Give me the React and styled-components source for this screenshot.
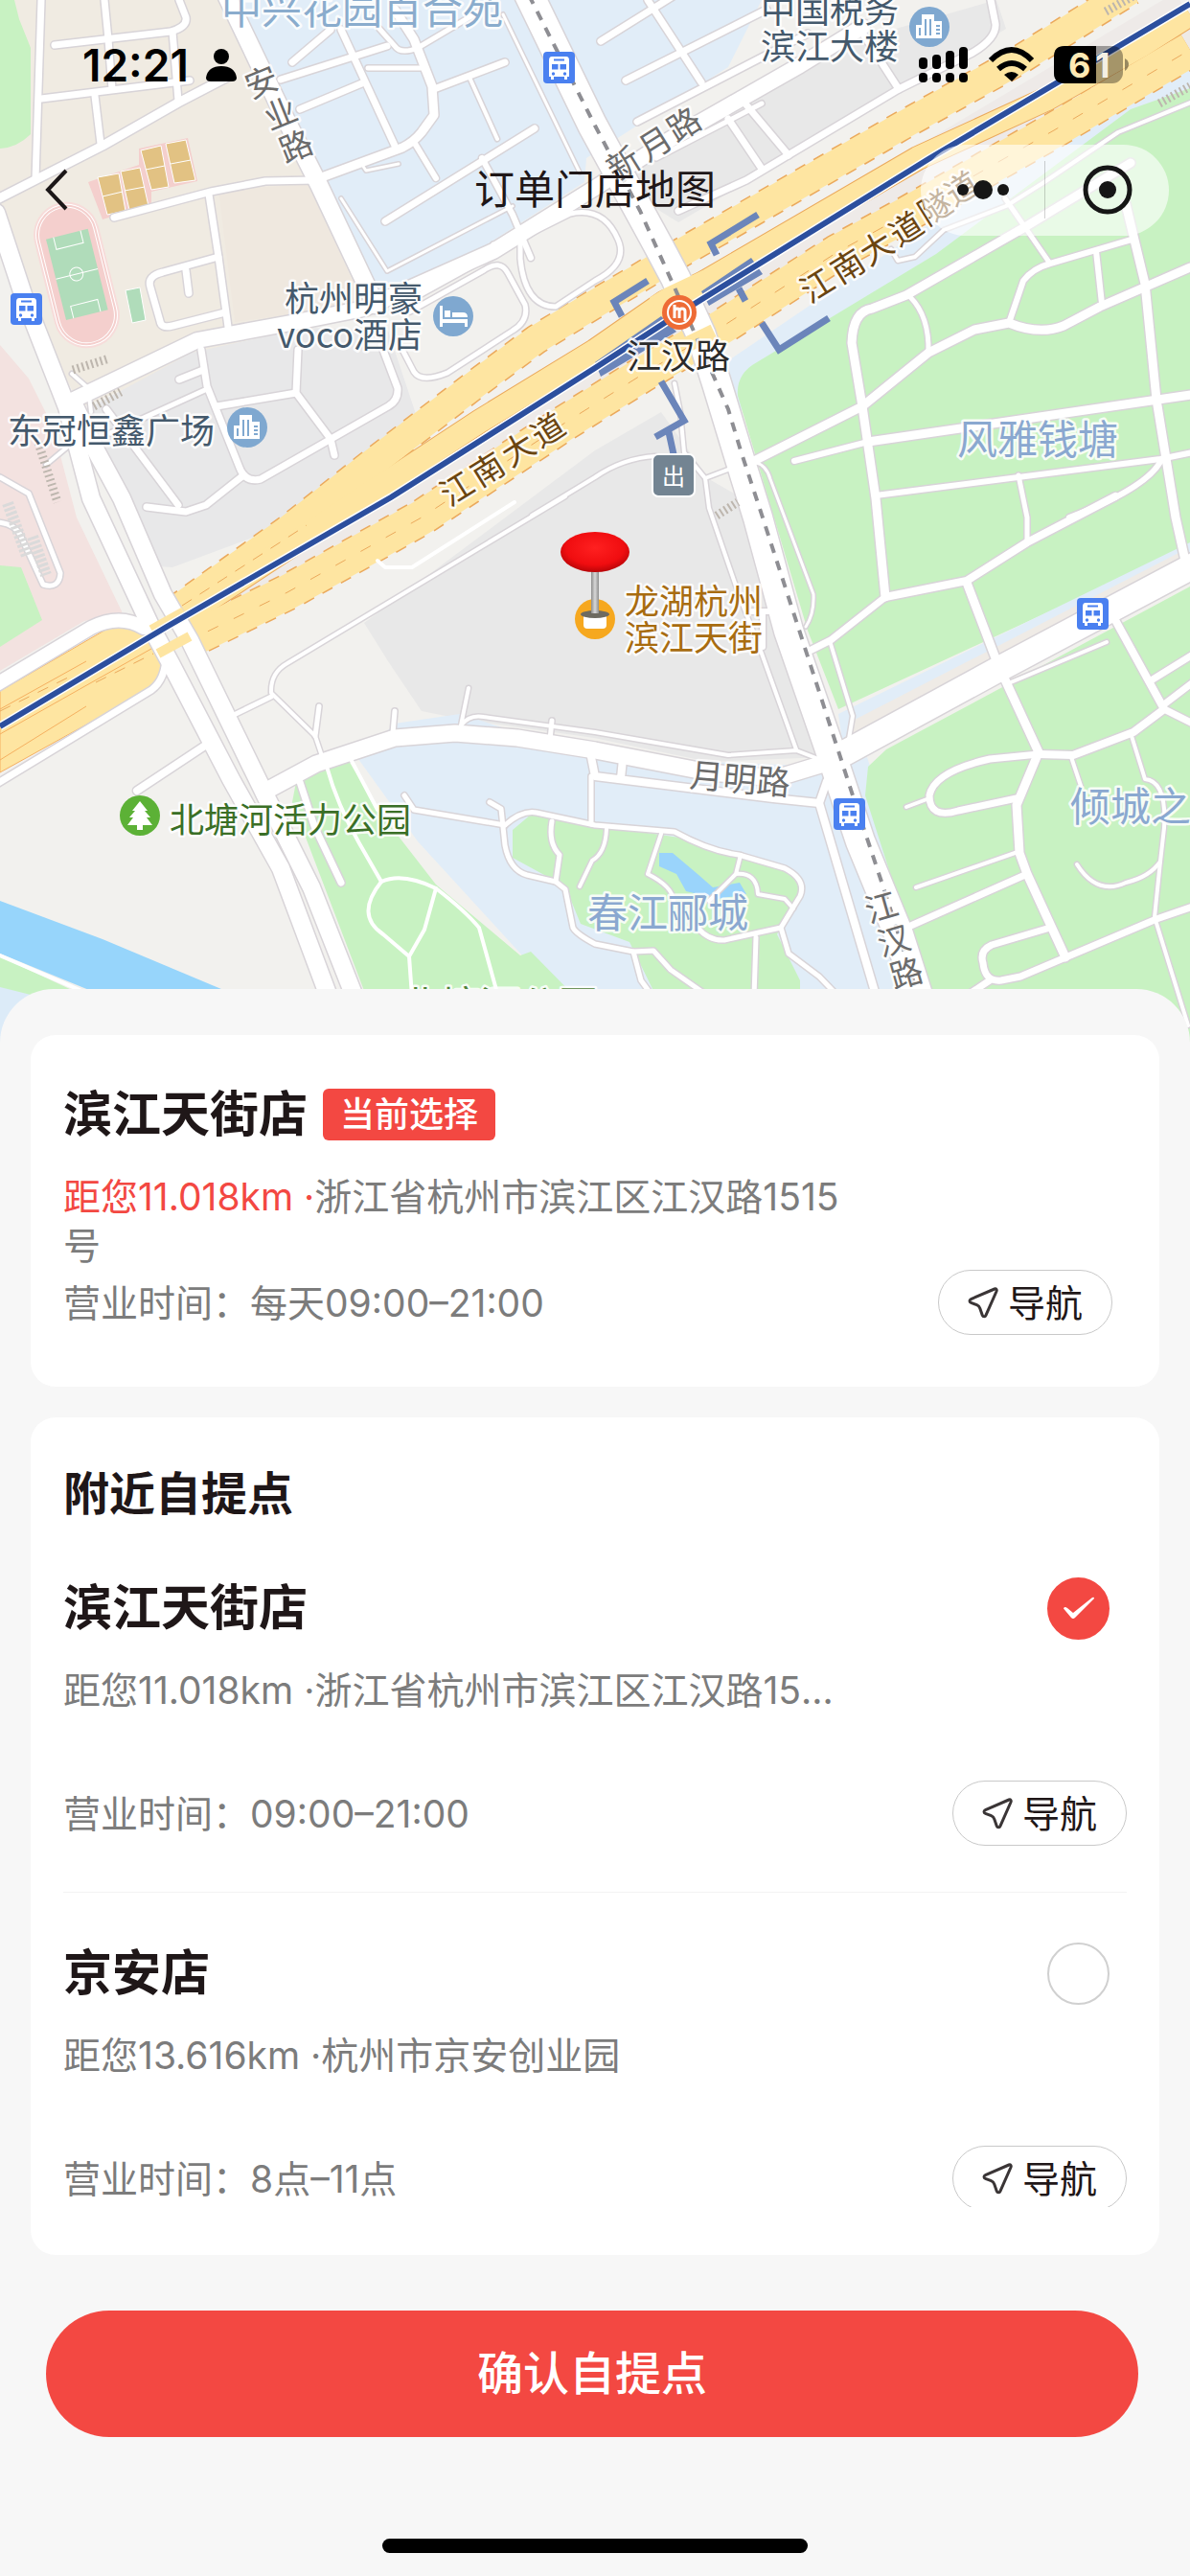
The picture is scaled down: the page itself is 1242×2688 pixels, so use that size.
import React, { useState } from "react";
import styled, { createGlobalStyle } from "styled-components";

const GREEN = "#c8f2c2";
const BLUE = "#e1edf8";

const areas = [
  { d: "M0 0H240L268 75 325 190 385 320 240 360 85 425 55 370 0 235Z", fill: "#f0ebe2" },
  { d: "M0 0H15L20 20 32 50V140Q18 154 0 155Z", fill: GREEN },
  { d: "M228 198 325 192 378 318 245 336Z", fill: "#efe8df" },
  { d: "M245 0H795L760 70 612 165 610 190 404 322 390 325 333 193Z", fill: BLUE },
  { d: "M640 190 760 120 900 40 1040 0 1050 30 938 98 708 232Z", fill: "#e8e8e8" },
  { d: "M85 430 200 368 320 342 405 345 440 450 430 470 320 540 180 592 150 590Z", fill: "#e8e8e9" },
  { d: "M0 360 30 395 55 445 80 540 128 640 88 648 0 700Z", fill: "#f3e2e0" },
  { d: "M0 590 22 592 44 647 0 675Z", fill: GREEN },
  { d: "M380 650 621 470 690 430 740 500 775 520 862 790 740 795 620 770 480 750 440 742 405 690Z", fill: "#e8e8e8" },
  { d: "M740 390 1242 50V150L770 430Z", fill: BLUE },
  { d: "M1242 92 1180 114 977 265 790 378Q768 390 770 413L843 658 875 740 1242 570Z", fill: GREEN },
  { d: "M875 745 1242 566V590L880 780Z", fill: BLUE },
  { d: "M878 778 890 752 1230 577 1230 590Z", fill: "#efebe6" },
  { d: "M862 800 905 790 1000 1090H950Z", fill: BLUE },
  { d: "M906 800 925 782 1242 612V1095H985L935 930 903 830Z", fill: GREEN },
  { d: "M374 792 412 755 480 745 621 790 862 800 960 1090H600L545 997 436 878Z", fill: BLUE },
  { d: "M309 816 364 794 396 847 455 923 543 997 554 993 620 1060H390L305 837Z", fill: GREEN },
  {
    d: "M535 866 554 850 621 861 716 875 819 904 837 926 811 975 835 1023V1050H690L657 983 606 964 590 925 535 895Z",
    fill: GREEN,
  },
  { d: "M688 890H702L728 912 744 926 772 921 779 933 750 938 716 930 706 912 688 904Z", fill: "#9ad4fb" },
  { d: "M0 940 107 980 250 1040H110L0 995Z", fill: "#97d5fb" },
  { d: "M0 998 90 1040H0Z", fill: GREEN },
  { d: "M0 1030 40 1040V1090H0Z", fill: "#dcebf8" },
];

// w is the width of the white surface, the casing is drawn a little wider
const roads = [
  { w: 18, d: "M-4 222 25 310 70 425 95 520 158 655 178 692 241 813 293 906 345 1045" },
  { w: 18, d: "M76 420 100 470 127 520 170 620 198 668 277 830 325 926 372 1045" },
  { w: 18, d: "M236 -5 293 114 333 193 392 318" },
  { w: 16, d: "M71 420 150 382 206 355 309 336 380 322 515 262 621 196 700 145 835 68 900 28" },
  { w: 30, d: "M550 -10 618 130 688 258 705 290 732 350 748 400 773 482 791 540 823 658 866 782 898 878 938 975 965 1060" },
  { w: 26, d: "M870 792 1041 699 1250 588" },
  { w: 17, d: "M866 795 810 812 740 806 621 783 540 770 475 765 412 770 330 797 280 824" },
  { w: 14, d: "M-5 715 95 655Q125 640 150 655" },
  { w: 7, d: "M-5 819 158 720Q174 708 173 680" },
  { w: 7, d: "M109 0 113 41 117 93" },
  { w: 7, d: "M57 47 178 33Q196 28 194 18L187 0" },
  { w: 7, d: "M180 33 186 105" },
  { w: 7, d: "M43 103 198 84" },
  { w: 7, d: "M99 100 105 150" },
  { w: 7, d: "M43 0 37 187" },
  { w: 9, d: "M-3 208 107 152 186 107 238 80" },
  { w: 7, d: "M119 227 220 200 277 189 330 188" },
  { w: 7, d: "M218 203 228 268 238 341" },
  { w: 7, d: "M228 268 170 284Q153 288 157 300L167 335Q168 343 180 340L235 326" },
  { w: 7, d: "M194 282 197 306" },
  { w: 7, d: "M210 365 216 403 250 488Q256 504 272 500L405 424Q416 418 415 405L398 360" },
  { w: 7, d: "M311 365 309 410 345 458 349 475" },
  { w: 7, d: "M226 424 309 410" },
  { w: 7, d: "M187 396 212 386" },
  { w: 5, d: "M216 406 115 452" },
  { w: 7, d: "M111 427 186 527" },
  { w: 7, d: "M153 529 194 534 215 527 254 496" },
  { w: 9, d: "M333 186 420 154Q432 148 440 138L453 120 451 90 432 41 412 10" },
  { w: 7, d: "M356 31 412 152" },
  { w: 7, d: "M305 65 345 31" },
  { w: 7, d: "M293 83 404 48" },
  { w: 5, d: "M396 30 412 48Q418 57 436 50L500 12" },
  { w: 7, d: "M313 114 380 86" },
  { w: 5, d: "M384 71 440 71" },
  { w: 7, d: "M453 93 527 65" },
  { w: 4, d: "M491 83 519 145" },
  { w: 6, d: "M432 148 455 186" },
  { w: 7, d: "M402 231 558 134" },
  { w: 6, d: "M503 165 535 224 554 269" },
  { w: 3, d: "M376 169 382 178 416 171" },
  { w: 3, d: "M525 15 605 180" },
  { w: 3, d: "M254 20 290 95" },
  { w: 3, d: "M356 207 404 283 535 215" },
  { w: 5, d: "M543 238V270Q548 320 580 320L621 293Q656 275 645 250 630 215 595 223L545 248" },
  { w: 5, d: "M420 365 432 388Q440 400 467 389L535 345Q552 335 548 318L530 285Q522 270 505 282L428 325" },
  { w: 5, d: "M515 255 514 266 425 315" },
  { w: 7, d: "M627 43 720 -15" },
  { w: 7, d: "M653 84 800 10" },
  { w: 7, d: "M665 127 843 35" },
  { w: 7, d: "M676 0 732 86" },
  { w: 7, d: "M708 220 779 188 938 93 1015 55Q1040 40 1039 25L1033 -5" },
  { w: 7, d: "M771 100 823 162" },
  { w: 7, d: "M760 124 795 176" },
  { w: 7, d: "M898 31 938 93" },
  { w: 5, d: "M685 165 795 108" },
  { w: 9, d: "M785 482 900 424 969 368 1017 344 1053 337Q1085 350 1110 340L1148 320 1242 279" },
  { w: 9, d: "M924 623 914 520 900 424 889 358Q890 325 910 322L946 308 1068 238 1180 170" },
  { w: 5, d: "M950 310Q970 330 969 368" },
  { w: 6, d: "M1053 337 1068 293Q1078 280 1096 275L1181 250" },
  { w: 5, d: "M1049 207 1096 275" },
  { w: 6, d: "M1144 262 1150 317" },
  { w: 9, d: "M1175 213 1195 296 1207 417 1227 540 1237 585" },
  { w: 9, d: "M906 461 1250 411" },
  { w: 6, d: "M829 481 906 461" },
  { w: 6, d: "M914 517 1211 479 1250 471" },
  { w: 5, d: "M1063 496 1072 540V565" },
  { w: 6, d: "M1211 482Q1195 510 1116 540" },
  { w: 4, d: "M1250 104 1167 138 1090 190 1050 215 985 240 955 268 937 272 930 260" },
  { w: 8, d: "M924 623 1009 606 1072 566 1164 518" },
  { w: 7, d: "M924 623 867 668 847 678" },
  { w: 9, d: "M1009 608 1041 692 1084 785 1061 840 1064 890 1072 912 1112 999" },
  { w: 4, d: "M867 672 890 747 886 771" },
  { w: 7, d: "M1084 787 1033 792Q975 805 970 830 970 855 1000 846L1061 833" },
  { w: 4, d: "M946 842 970 833" },
  { w: 8, d: "M1084 787 1120 788 1183 764 1215 740 1164 647" },
  { w: 7, d: "M1203 709 1245 683M1215 735 1245 712M1215 740 1245 755" },
  { w: 4, d: "M1181 768 1195 813Q1218 815 1215 864L1211 899 1205 957 1240 1070" },
  { w: 4, d: "M1211 899Q1200 915 1175 921 1145 935 1124 902" },
  { w: 7, d: "M946 968 1072 912" },
  { w: 4, d: "M956 926 1065 888" },
  { w: 7, d: "M1096 968 1035 986Q1022 992 1026 1005 1028 1025 1045 1023L1065 1019 1207 959 1245 946" },
  { w: 7, d: "M1033 1023 1000 1045" },
  { w: 4, d: "M1118 790 1128 820" },
  { w: 4, d: "M1155 670 1055 712" },
  { w: 8, d: "M855 838 916 1045" },
  { w: 8, d: "M863 815 855 838 807 833 621 810 617 790M650 792 648 812" },
  { w: 5, d: "M617 810V860" },
  {
    w: 5,
    d: "M527 861Q545 845 560 848L621 861 704 868Q740 888 771 892L819 906Q842 918 835 935L815 968 823 995 855 1019 880 1045",
  },
  { w: 5, d: "M422 830 432 845 527 861" },
  { w: 5, d: "M511 837 523 844 527 882Q532 908 550 913L580 920 590 928 598 968Q602 975 621 985L661 993 669 1023 685 1045" },
  { w: 5, d: "M576 857Q572 880 584 892L580 920" },
  { w: 4, d: "M633 865Q632 890 618 898L605 925" },
  { w: 4, d: "M690 870 676 912Q702 925 703 940M773 892 768 912 740 940M768 912Q790 910 791 933L819 938 828 948" },
  { w: 5, d: "M815 968 756 981Q740 982 728 968M789 978 787 1040" },
  { w: 5, d: "M661 993 682 992 700 1012 740 1040" },
  { w: 4, d: "M590 518 300 692Q282 702 283 723L329 768 337 792" },
  { w: 5, d: "M242 747 283 727M333 737 329 768" },
  { w: 5, d: "M412 742 410 765M576 752 574 772" },
  { w: 4, d: "M489 718 481 757Q490 745 505 748L621 764 760 788 831 783 862 795" },
  { w: 8, d: "M143 825 214 778" },
  { w: 4, d: "M704 400 710 430 714 472 736 499 740 530 771 620 795 682 831 782" },
  { w: 4, d: "M555 538 621 498Q650 478 684 476M736 499 765 488" },
  { w: 3, d: "M787 482Q800 485 804 500L849 620Q850 640 841 654" },
  { w: 6, d: "M796 640V675M785 638H808" },
  { w: 7, d: "M313 816 328 862 356 921" },
  { w: 5, d: "M-5 545Q15 545 22 560L45 610Q62 615 63 598L30 515 0 498" },
  { w: 4, d: "M75 390 92 405 95 430M48 485 90 450" },
];

const parkPaths = [
  "M341 800Q352 840 375 880L398 920Q420 910 455 927 485 950 500 968L520 1040",
  "M398 920Q370 955 400 975L427 998 430 1040M455 927 443 970 427 998",
  "M366 792 394 845",
  "M0 997 90 1036",
  "M394 585 402 592H430L537 524",
];

const stairs = ["M76 386 114 374", "M98 424 126 409", "M40 462 60 524", "M1154 12 1186 -6", "M1210 108 1242 90", "M748 538 770 524"];

// carriageways of 江南大道
const ramp = "M184 636 300 553 385 486 500 398 560 354 621 317 667 290 700 270 940 132 1060 65 1180 -10";
const northLane = "M187 646 330 552 500 440 621 366 693 316 733 296 958 165 1093 103 1190 48 1242 15";
const southLane = "M190 672 300 618 440 540 590 441 670 391 752 342 874 263 940 227 1100 136 1242 52";
const metroLine = "M0 758 174 654 408 519 621 384 712 325 969 166 1242 4";

function Casing({ w, d }) {
  return <path d={d} strokeWidth={w + 3} stroke="#d8d4d8" />;
}

function Label({ lines, x, y, size = 36, lineHeight = 38, color, anchor = "start", angle = 0, weight = 400 }) {
  return (
    <MapText
      fill={color}
      fontSize={size}
      fontWeight={weight}
      textAnchor={anchor}
      transform={angle ? `rotate(${angle} ${x} ${y})` : undefined}
    >
      {lines.map((line, i) => (
        <tspan key={line} x={x} y={y + i * lineHeight}>
          {line}
        </tspan>
      ))}
    </MapText>
  );
}

// road names that run down a street, one turned character after another
function StreetName({ chars, color = "#6b6b6b", angle }) {
  return chars.map(([char, x, y], i) => (
    <MapText
      key={i}
      fill={color}
      fontSize={34}
      textAnchor="middle"
      transform={`translate(${x} ${y}) rotate(${angle})`}
    >
      <tspan y={12}>{char}</tspan>
    </MapText>
  ));
}

function BusStop({ x, y }) {
  return (
    <g transform={`translate(${x} ${y})`}>
      <rect width="33" height="33" rx="4" fill="#4a80f0" />
      <path d="M9 5H24Q27 5 27 9V26H25V29H22V26H11V29H8V26H6V9Q6 5 9 5Z" fill="#fff" />
      <path d="M11 7.500H22V9.500H11ZM9 13H15.500V18.500H9ZM17.500 13H24V18.500H17.500Z" fill="#4a80f0" />
      <circle cx="10.500" cy="23" r="1.700" fill="#4a80f0" />
      <circle cx="22.500" cy="23" r="1.700" fill="#4a80f0" />
    </g>
  );
}

function Building({ x, y }) {
  return (
    <g transform={`translate(${x} ${y})`}>
      <circle r="21" fill="#7fa8d0" />
      <path d="M-14 12V-2H-8V-13H5V-6H13V12Z" fill="#fff" />
      <path d="M-10 1V9M-4 -8V9M1 -8V9M7 -1H11M7 3H11M7 7H11" stroke="#7fa8d0" strokeWidth="2" />
    </g>
  );
}

function StoreMap() {
  return (
    <MapSvg viewBox="0 0 1242 1090" preserveAspectRatio="xMidYMin slice" role="img" aria-label="门店地图">
      <defs>
        <radialGradient id="pinHead" cx="50%" cy="40%" r="60%">
          <stop offset="0" stopColor="#ff2020" />
          <stop offset="0.7" stopColor="#f00d10" />
          <stop offset="1" stopColor="#b80508" />
        </radialGradient>
        <linearGradient id="pinStem">
          <stop offset="0" stopColor="#8d8d8d" />
          <stop offset="0.5" stopColor="#d8d8d8" />
          <stop offset="1" stopColor="#8d8d8d" />
        </linearGradient>
      </defs>
      <rect width="1242" height="1090" fill="#f2f1ee" />
      {areas.map((area) => (
        <path key={area.d} {...area} />
      ))}

      {/* sports ground */}
      <g transform="rotate(-14 80 287)">
        <rect x="47" y="211" width="66" height="152" rx="33" fill="#f4cfcd" stroke="#f7dcda" strokeWidth="3" />
        <g fill="none" stroke="#fff" strokeWidth="1">
          <rect x="51" y="215" width="58" height="144" rx="29" />
          <rect x="48" y="212" width="64" height="150" rx="32" />
        </g>
        <rect x="58" y="243" width="45" height="87" fill="#b0dcba" />
        <path d="M58 286H103M66 243V256H95V243M66 330V317H95V330" fill="none" stroke="#fff" strokeWidth="1" />
        <circle cx="80" cy="286" r="7" fill="none" stroke="#fff" strokeWidth="1" />
      </g>
      <path d="M92 190 145 172V155L196 144 206 189 158 200V213L107 229Z" fill="#f4cfcd" />
      <g fill="#e2c283" stroke="#fff" strokeWidth="1">
        <path d="M102 185 124 181 131 220 112 224ZM107 205 128 200" />
        <path d="M126 179 146 175 155 215 135 219ZM130 199 151 195" />
        <path d="M147 157 168 152 176 195 158 198ZM152 177 172 173" />
        <path d="M173 150 194 146 204 188 182 191ZM178 171 199 167" />
      </g>
      <path d="M131 303 146 300 152 334 138 337Z" fill="#b0dcba" stroke="#fff" />

      <g fill="none" strokeLinejoin="round">
        <path d="M190 650 420 512 621 392 740 318 960 186 1242 18" stroke="#eeeae8" strokeWidth="60" />
        <path d="M0 721 112 656Q150 645 172 662L172 690Q170 710 150 723L0 806Z" fill="#fee5a1" stroke="#f5b060" />
        <g stroke="#eba95c">
          <path d={ramp} strokeWidth="32" strokeDasharray="12 10" />
          <path d={northLane} strokeWidth="26" />
          <path d={southLane} strokeWidth="39" strokeDasharray="12 10" />
        </g>
        <g stroke="#fee5a1">
          <path d={ramp} strokeWidth="29" />
          <path d={northLane} strokeWidth="24" />
          <path d={southLane} strokeWidth="36" />
        </g>
        <path d="M190 632 320 548M0 742 75 705M100 712 160 682M70 770 160 720" stroke="#eba95c" strokeDasharray="12 10" />
        <path d={southLane} stroke="#eba95c" strokeDasharray="12 18" />
        <path d="M0 766 165 673M0 793 90 737M0 740 90 690" stroke="#f5b060" strokeWidth="1" />
      </g>

      <g fill="none" strokeLinejoin="round" strokeLinecap="round">
        {roads.map((road) => (
          <Casing key={road.d} {...road} />
        ))}
        {roads.map((road) => (
          <path key={road.d} d={road.d} strokeWidth={road.w} stroke="#fff" />
        ))}
        {parkPaths.map((d) => (
          <path key={d} d={d} strokeWidth="4" stroke="#fff" />
        ))}
      </g>
      <g fill="none">
        {stairs.map((d) => (
          <path key={d} d={d} stroke="#bdb6ae" strokeWidth="9" strokeDasharray="2 3" />
        ))}
        <path d="M8 525 28 580M34 560 48 600" stroke="#dadada" strokeWidth="12" strokeDasharray="3 2" />
        <path d="M684 321 700 311 738 293" stroke="#fee5a1" strokeWidth="24" />
        <path d="M716 360 745 346" stroke="#fee5a1" strokeWidth="16" />
        <path d="M158 657 192 638M165 682 198 664" stroke="#fee5a1" strokeWidth="10" />
        <path
          d="M552 -5 621 131 668 220 704 300 745 393 760 427 773 470 795 537 843 685 890 830 922 926 965 1060"
          stroke="#8e8e93"
          strokeWidth="4"
          strokeDasharray="10 9"
        />
      </g>

      {/* metro station and exits */}
      <path d="M621 378 690 330 706 346 627 393ZM732 304 784 269 796 286 740 319Z" fill="#6b85ba" />
      <g fill="none" stroke="#6b85ba" strokeWidth="7">
        <path d="M791 224 742 254 748 266M676 293 641 315 649 330M771 301 778 314" />
        <path d="M795 337 813 365 865 332M690 398 714 439 684 456M698 451 703 474" />
      </g>
      <path d={metroLine} fill="none" stroke="#fff" strokeWidth="9" />
      <path d={metroLine} fill="none" stroke="#2c4f9e" strokeWidth="6" />

      <BusStop x={567} y={54} />
      <BusStop x={11} y={306} />
      <BusStop x={1124} y={624} />
      <BusStop x={870} y={833} />
      <Building x={970} y={28} />
      <Building x={258} y={446} />
      <g transform="translate(473 330)">
        <circle r="21" fill="#7fa8d0" />
        <path d="M-14 -11H-11V3H15V11H12V7H-11V11H-14ZM-9 -6H-3V1H-9ZM-1 -4H10Q15 -4 15 1H-1Z" fill="#fff" />
      </g>
      <g transform="translate(709 326)">
        <circle r="18" fill="#ee6b35" />
        <g fill="none" stroke="#fff">
          <circle r="12" strokeWidth="2" />
          <path d="M-5 -8V6M-5 -1Q-5 -4 -2 -4 0 -4 0 -1V6M0 -1Q0 -4 3 -4 6 -4 6 -1V9" strokeWidth="3" />
        </g>
      </g>
      <g transform="translate(146 851)">
        <circle r="21" fill="#5cb136" />
        <path d="M0 -15 8 -5H5L11 2H7L13 10H3V15H-3V10H-13L-7 2H-11L-5 -5H-8Z" fill="#fff" />
      </g>
      <rect x="681" y="474" width="44" height="44" rx="6" fill="#738492" stroke="#fff" strokeWidth="2" />
      <ExitText x="703" y="506">
        出
      </ExitText>

      <Label lines={["中兴花园百合苑"]} x={231} y={25} size={42} color="#8aaccd" />
      <Label lines={["中国税务", "滨江大楼"]} x={794} y={24} color="#44596c" />
      <Label lines={["杭州明豪", "voco酒店"]} x={441} y={325} color="#44596c" anchor="end" />
      <Label lines={["东冠恒鑫广场"]} x={8} y={463} color="#44596c" />
      <Label lines={["江汉路"]} x={654} y={385} color="#2a2a2a" />
      <Label lines={["风雅钱塘"]} x={999} y={474} size={42} color="#8aa8d0" />
      <Label lines={["龙湖杭州", "滨江天街"]} x={652} y={641} color="#a86c10" />
      <Label lines={["北塘河活力公园"]} x={177} y={869} color="#3a6f26" />
      <Label lines={["春江郦城"]} x={613} y={968} size={42} color="#8aa8d0" />
      <Label lines={["倾城之恋"]} x={1117} y={857} size={42} color="#8aa8d0" />
      <Label lines={["北塘河公园"]} x={419} y={1064} size={41} color="#4f8338" />
      <Label lines={["月明路"]} x={719} y={821} size={35} color="#6b6b6b" angle={5} />
      <StreetName angle={-22} chars={[["安", 273, 86], ["业", 293, 119], ["路", 309, 153]]} />
      <StreetName angle={-32} chars={[["新", 651, 171], ["月", 684, 150], ["路", 714, 130]]} />
      <StreetName angle={-16} chars={[["江", 920, 947], ["汉", 933, 982], ["路", 946, 1016]]} />
      <StreetName
        angle={-32}
        color="#6b4510"
        chars={[["江", 477, 510], ["南", 509, 490], ["大", 541, 469], ["道", 572, 449]]}
      />
      <StreetName
        angle={-32}
        color="#6b4510"
        chars={[["江", 853, 298], ["南", 885, 278], ["大", 915, 259], ["道", 946, 239], ["隧", 976, 217], ["道", 1004, 197]]}
      />

      {/* pin on the picked store */}
      <circle cx="621" cy="646" r="21" fill="#f6a81f" />
      <path d="M609 641H633V652Q633 656 629 656H613Q609 656 609 652Z" fill="#fff" />
      <ellipse cx="621" cy="641" rx="15" ry="4" fill="#6d6a60" />
      <path d="M617 590H625V640H617Z" fill="url(#pinStem)" />
      <ellipse cx="621" cy="576" rx="36" ry="21" fill="url(#pinHead)" />
    </MapSvg>
  );
}

function StatusIcons() {
  return (
    <svg width="221" height="40" viewBox="0 0 221 40" aria-hidden="true">
      <g>
        <rect x="0" y="12" width="9" height="12" rx="4" />
        <rect x="14" y="9" width="9" height="15" rx="4" />
        <rect x="28" y="5" width="9" height="19" rx="4" />
        <rect x="42" y="1" width="9" height="23" rx="4" />
        <rect x="0" y="28" width="9" height="10" rx="4" />
        <rect x="14" y="28" width="9" height="10" rx="4" />
        <rect x="28" y="28" width="9" height="10" rx="4" />
        <rect x="42" y="28" width="9" height="10" rx="4" />
      </g>
      <g fill="none" stroke="#000" strokeWidth="6">
        <path d="M75 15Q97 -7 118 15" />
        <path d="M83 24Q97 12 111 24" />
      </g>
      <path d="M89 30Q97 24 104 30L97 37Z" />
      <rect x="141" y="0" width="72" height="39" rx="11" opacity="0.35" />
      <path d="M185 0H152Q141 0 141 11V28Q141 39 152 39H185Z" />
      <path d="M215 13Q219 15 219 19T215 26Z" opacity="0.4" />
      <BatteryText x="156" y="33" fill="#ffe9b4">
        6
      </BatteryText>
      <BatteryText x="184" y="33" fill="#f4efe4">
        1
      </BatteryText>
    </svg>
  );
}

function NavButton() {
  return (
    <NavigateButton type="button">
      <svg width="32" height="33" viewBox="0 0 32 33" fill="none" stroke="#3a3536" strokeWidth="3" aria-hidden="true">
        <path d="M28 2 3.500 12.500C1.500 13.500 1.500 15.500 3.500 16.300L9.500 18.700C11.200 19.400 12.200 20.500 12.800 22.200L15.300 29.400C16 31.300 18.300 31.300 19 29.400L30 4.500C30.700 2.700 29.700 1.300 28 2Z" />
      </svg>
      导航
    </NavigateButton>
  );
}

const stores = [
  { id: "binjiang", name: "滨江天街店", distance: "11.018km", address: "浙江省杭州市滨江区江汉路1515号", hours: "09:00–21:00" },
  { id: "jingan", name: "京安店", distance: "13.616km", address: "杭州市京安创业园", hours: "8点–11点" },
];

export default function App() {
  const [picked, setPicked] = useState("binjiang");

  return (
    <>
      <GlobalStyle />
      <Page>
        <MapArea>
          <StoreMap />
          <StatusBar>
            <Clock>
              12:21
              <svg width="32" height="34" viewBox="0 0 32 34" aria-hidden="true">
                <ellipse cx="16" cy="8" rx="8" ry="8" />
                <path d="M0 30Q2 18 16 18T32 30Q32 34 27 34H5Q0 34 0 30Z" />
              </svg>
            </Clock>
            <StatusIcons />
          </StatusBar>
          <TitleBar>
            <BackButton type="button" aria-label="返回">
              <svg width="26" height="44" viewBox="0 0 26 44" fill="none" stroke="#1c1718" strokeWidth="4">
                <path d="M23 2 4 22 23 42" />
              </svg>
            </BackButton>
            <PageTitle>订单门店地图</PageTitle>
            <Capsule>
              <CapsuleButton type="button" aria-label="更多">
                <svg width="56" height="20" viewBox="0 0 56 20">
                  <circle cx="7" cy="10" r="6" />
                  <circle cx="28" cy="10" r="10" />
                  <circle cx="49" cy="10" r="6" />
                </svg>
              </CapsuleButton>
              <CapsuleLine />
              <CapsuleButton type="button" aria-label="关闭">
                <svg width="52" height="52" viewBox="0 0 52 52">
                  <circle cx="26" cy="26" r="23" fill="none" stroke="#161616" strokeWidth="5" />
                  <circle cx="26" cy="26" r="9" />
                </svg>
              </CapsuleButton>
            </Capsule>
          </TitleBar>
        </MapArea>

        <Sheet>
          <Card>
            <CurrentStore>
              <TitleRow>
                <StoreName as="h2">滨江天街店</StoreName>
                <Badge>当前选择</Badge>
              </TitleRow>
              <Address>
                <Distance>距您11.018km ·</Distance>浙江省杭州市滨江区江汉路1515号
              </Address>
              <HoursRow>
                <Hours>营业时间：每天09:00–21:00</Hours>
                <NavButton />
              </HoursRow>
            </CurrentStore>
          </Card>

          <Card>
            <ListTitle>附近自提点</ListTitle>
            <StoreList>
              {stores.map((store) => (
                <StoreItem key={store.id}>
                  <TitleRow $spread>
                    <StoreName as="label" htmlFor={store.id}>
                      {store.name}
                    </StoreName>
                    <RadioBox>
                      <Radio
                        type="radio"
                        name="store"
                        id={store.id}
                        checked={picked === store.id}
                        onChange={() => setPicked(store.id)}
                      />
                      {picked === store.id && (
                        <svg width="34" height="24" viewBox="0 0 34 24" fill="#fff" aria-hidden="true">
                          <path d="M1 12.500Q2 10 5 12L11 17 31 1Q33 0 33 2L13 22Q11 24 9 22Z" />
                        </svg>
                      )}
                    </RadioBox>
                  </TitleRow>
                  <Address $oneLine>
                    距您{store.distance} ·{store.address}
                  </Address>
                  <HoursRow $spaced>
                    <Hours>营业时间：{store.hours}</Hours>
                    <NavButton />
                  </HoursRow>
                </StoreItem>
              ))}
            </StoreList>
          </Card>
        </Sheet>

        <Footer>
          <ConfirmButton type="button">确认自提点</ConfirmButton>
        </Footer>
        <HomeIndicator />
      </Page>
    </>
  );
}

const GlobalStyle = createGlobalStyle`
  * {
    box-sizing: border-box;
  }
  body {
    margin: 0;
    background: #f7f7f7;
    color: #1f1718;
    font-family: Inter, "Noto Sans CJK SC", sans-serif;
  }
  button {
    padding: 0;
    border: 0;
    background: none;
    color: inherit;
    font-family: inherit;
    cursor: pointer;
  }
  h1, h2, p, ul {
    margin: 0;
    padding: 0;
  }
`;

const Page = styled.div`
  display: flex;
  flex-direction: column;
  min-height: 100vh;
`;

const MapArea = styled.header`
  position: relative;
  height: 1090px;
  overflow: hidden;
`;

const MapSvg = styled.svg`
  position: absolute;
  inset: 0;
  width: 100%;
  height: 100%;
`;

const MapText = styled.text`
  font-family: "Noto Sans CJK SC", sans-serif;
  paint-order: stroke;
  stroke: #ffffffd9;
  stroke-width: 5px;
  stroke-linejoin: round;
`;

const ExitText = styled.text`
  font-family: "Noto Sans CJK SC", sans-serif;
  font-size: 24px;
  fill: #fff;
  text-anchor: middle;
`;

const BatteryText = styled.text`
  font-family: Inter, sans-serif;
  font-size: 36px;
  font-weight: 700;
`;

const StatusBar = styled.div`
  position: relative;
  display: flex;
  align-items: center;
  justify-content: space-between;
  height: 136px;
  padding: 0 62px 0 86px;
`;

const Clock = styled.div`
  display: flex;
  align-items: center;
  gap: 18px;
  color: #000;
  font-size: 46px;
  font-weight: 600;
`;

const TitleBar = styled.div`
  position: relative;
  display: grid;
  grid-template-columns: 1fr auto 1fr;
  align-items: center;
  height: 124px;
  padding: 0 22px;
`;

const BackButton = styled.button`
  display: flex;
  justify-self: start;
  padding: 0 24px;
`;

const PageTitle = styled.h1`
  font-size: 42px;
  font-weight: 400;
  line-height: 60px;
`;

const Capsule = styled.div`
  display: flex;
  align-items: center;
  justify-self: end;
  width: 259px;
  height: 95px;
  border-radius: 48px;
  background: rgba(255, 255, 255, 0.6);
`;

const CapsuleButton = styled.button`
  display: flex;
  flex: 1;
  align-items: center;
  justify-content: center;

  svg {
    fill: #161616;
  }
`;

const CapsuleLine = styled.span`
  width: 1px;
  height: 60px;
  background: rgba(0, 0, 0, 0.18);
`;

const Sheet = styled.main`
  position: relative;
  display: flex;
  flex-direction: column;
  gap: 32px;
  margin-top: -58px;
  padding: 48px 32px 0;
  border-radius: 56px 56px 0 0;
  background: #f7f7f7;
`;

const Card = styled.section`
  padding: 0 34px;
  border-radius: 26px;
  background: #fff;
`;

const CurrentStore = styled.div`
  padding: 50px 15px 54px 0;
`;

const TitleRow = styled.div`
  display: flex;
  align-items: center;
  justify-content: ${(props) => (props.$spread ? "space-between" : "flex-start")};
  gap: 16px;
  height: 66px;
  padding-right: 18px;
`;

const StoreName = styled.span`
  font-size: 51px;
  font-weight: 700;
  line-height: 66px;
`;

const Badge = styled.span`
  padding: 0 18px;
  border-radius: 6px;
  background: #f34842;
  color: #fff;
  font-size: 36px;
  font-weight: 500;
  line-height: 54px;
`;

const Address = styled.p`
  max-width: 818px;
  margin-top: 27px;
  color: #7c7c7c;
  font-size: 39px;
  line-height: 51px;
  ${(props) =>
    props.$oneLine &&
    `
    overflow: hidden;
    text-overflow: ellipsis;
    white-space: nowrap;
  `}
`;

const Distance = styled.span`
  color: #f34842;
`;

const HoursRow = styled.div`
  display: flex;
  align-items: center;
  justify-content: space-between;
  margin-top: ${(props) => (props.$spaced ? "69px" : "0")};
`;

const Hours = styled.p`
  color: #7c7c7c;
  font-size: 39px;
  line-height: 51px;
`;

const NavigateButton = styled.button`
  display: flex;
  align-items: center;
  justify-content: center;
  gap: 10px;
  width: 182px;
  height: 68px;
  border: 1px solid #c9c9c9;
  border-radius: 34px;
  font-size: 39px;
  line-height: 51px;
`;

const ListTitle = styled.h2`
  padding-top: 45px;
  font-size: 48px;
  font-weight: 700;
  line-height: 70px;
`;

const StoreList = styled.ul`
  height: 709px;
  margin-bottom: 50px;
  overflow: hidden;
  list-style: none;
`;

const StoreItem = styled.li`
  padding: 51px 0 48px;
  border-bottom: 1px solid #f3f3f3;
`;

const RadioBox = styled.span`
  display: grid;
  place-items: center;

  > * {
    grid-area: 1 / 1;
  }
  svg {
    pointer-events: none;
  }
`;

const Radio = styled.input`
  width: 65px;
  height: 65px;
  margin: 0;
  appearance: none;
  border: 2px solid #d0d0d0;
  border-radius: 50%;

  &:checked {
    border-color: #f34842;
    background: #f34842;
  }
`;

const Footer = styled.footer`
  padding: 58px 54px 0 48px;
`;

const ConfirmButton = styled.button`
  width: 100%;
  height: 132px;
  border-radius: 66px;
  background: #f34842;
  color: #fff;
  font-size: 48px;
  font-weight: 500;
  line-height: 60px;
`;

const HomeIndicator = styled.div`
  align-self: center;
  width: 444px;
  height: 15px;
  margin: auto 0 24px;
  border-radius: 8px;
  background: #000;
`;
